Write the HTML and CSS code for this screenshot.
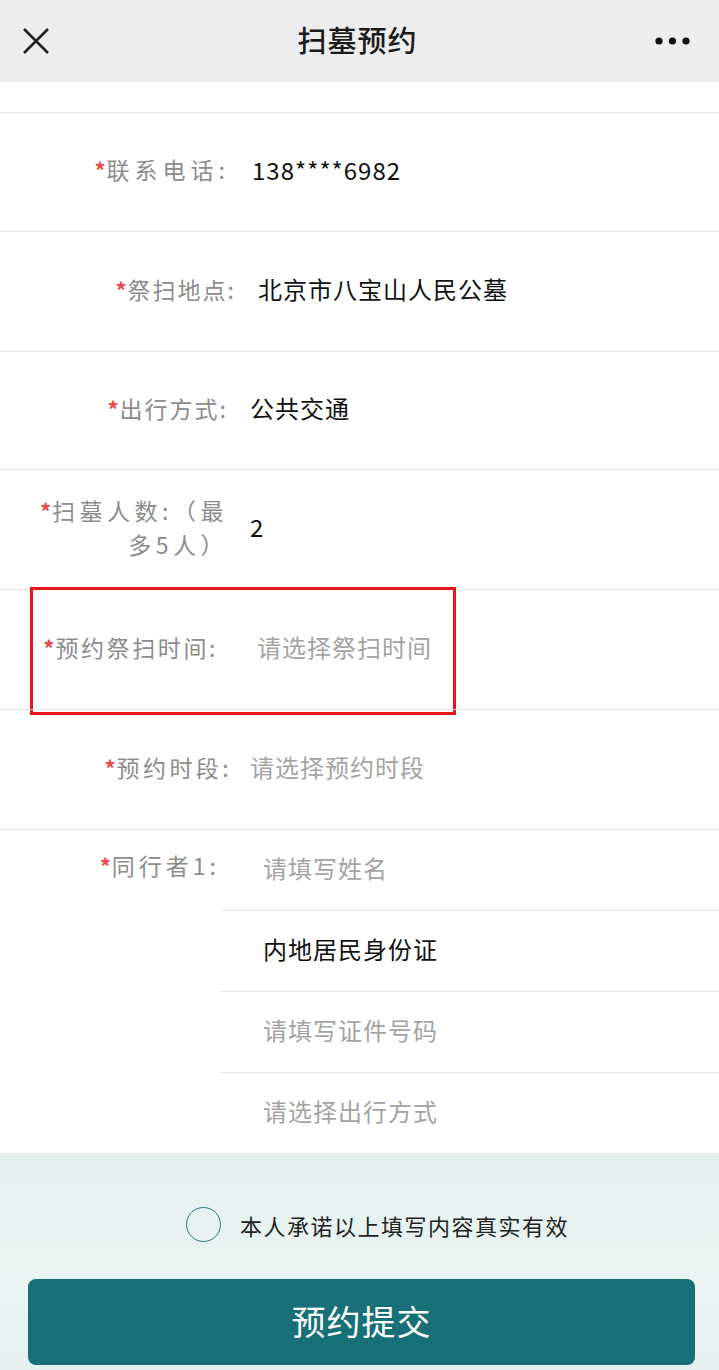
FILE: index.html
```html
<html>
<head>
<meta http-equiv="Content-Type" content="text/html; charset=UTF-8" />
<meta name="viewport" content="width=device-width,initial-scale=1.0">
<link rel="stylesheet" href="styles.css">
</head>
<body>

<div class="topbar">
	<svg class="icon-close" width="28" height="28" viewBox="0 0 28 28">
		<path d="M2 2 L26 26 M26 2 L2 26" stroke="#222" stroke-width="2.6" fill="none" />
	</svg>
	<div class="title">扫墓预约</div>
	<svg class="icon-more" width="36" height="10" viewBox="0 0 36 10">
		<circle cx="4" cy="5" r="3.6" fill="#111" />
		<circle cx="17.5" cy="5" r="3.6" fill="#111" />
		<circle cx="31" cy="5" r="3.6" fill="#111" />
	</svg>
</div>

<div class="spacer"></div>

<form class="form">
	<div class="row row-first">
		<div class="label label-phone"><span class="req">*</span>联系电话:</div>
		<div class="value">138****6982</div>
	</div>
	<div class="row">
		<div class="label label-place"><span class="req">*</span>祭扫地点:</div>
		<div class="value">北京市八宝山人民公墓</div>
	</div>
	<div class="row row-short">
		<div class="label label-way"><span class="req">*</span>出行方式:</div>
		<div class="value">公共交通</div>
	</div>
	<div class="row">
		<div class="label label-wrap"><span class="req">*</span>扫墓人数:（最多5人）</div>
		<div class="value">2</div>
	</div>
	<div class="row">
		<div class="label label-date"><span class="req">*</span>预约祭扫时间:</div>
		<div class="value placeholder">请选择祭扫时间</div>
		<div class="mark"></div>
	</div>
	<div class="row">
		<div class="label label-slot"><span class="req">*</span>预约时段:</div>
		<div class="value placeholder">请选择预约时段</div>
	</div>

	<div class="companion">
		<div class="label label-top"><span class="req">*</span>同行者1:</div>
		<div class="sublist">
			<div class="subrow placeholder">请填写姓名</div>
			<div class="subrow">内地居民身份证</div>
			<div class="subrow placeholder">请填写证件号码</div>
			<div class="subrow placeholder">请选择出行方式</div>
		</div>
	</div>
</form>

<div class="footer">
	<label class="agree">
		<span class="radio"></span>
		<span>本人承诺以上填写内容真实有效</span>
	</label>
	<button class="submit" type="button">预约提交</button>
</div>

</body>
</html>
```

FILE: styles.css
```css
:root {
	--color-line: #e6e6e6;
	--color-label: #8c8c8c;
	--color-hint: #a3a3a3;
	--color-red: #e94b4b;
	--color-teal: #176f78;
}

body {
	margin: 0;
	background-color: #ffffff;
	color: #111111;
	font-family: "Noto Sans CJK SC", "Noto Sans", sans-serif;
	width: 719px;
	height: 1370px;
	overflow: hidden;
}

.topbar {
	height: 82px;
	background-color: #ededed;
	display: flex;
	align-items: center;
	justify-content: space-between;
	padding: 0 28px 0 22px;
	box-sizing: border-box;
}

.title {
	font-size: 29px;
	font-weight: 500;
	color: #1a1a1a;
	letter-spacing: 1px;
	margin-left: 10px;
	margin-bottom: 4px;
}

.spacer {
	height: 30px;
}

.form {
	margin: 0;
}

.row {
	position: relative;
	display: flex;
	align-items: center;
	height: 120px;
	padding-bottom: 6px;
	border-top: 1px solid var(--color-line);
	box-sizing: border-box;
}

.row-first {
	height: 119px;
}

.row-short {
	height: 118px;
}

.label {
	flex: 0 0 230px;
	text-align: right;
	font-size: 23px;
	letter-spacing: 1px;
	line-height: 34px;
	color: var(--color-label);
}

.label-phone {
	letter-spacing: 5px;
}

.label-place {
	flex-basis: 236px;
	letter-spacing: 2px;
}

.label-way {
	flex-basis: 228px;
	letter-spacing: 2px;
}

.label-wrap {
	flex-basis: 228px;
	padding-left: 30px;
	box-sizing: border-box;
	letter-spacing: 4.5px;
}

.label-date {
	flex-basis: 218px;
	letter-spacing: 2.6px;
}

.label-date + .value {
	padding-left: 39px;
}

.label-slot {
	flex-basis: 232px;
	letter-spacing: 3.4px;
}

.label-slot + .value {
	padding-left: 18px;
}

.req {
	color: var(--color-red);
	font-weight: bold;
	font-size: 22px;
	letter-spacing: 1px;
}

.value {
	padding-left: 22px;
	font-size: 24px;
	letter-spacing: 1px;
	color: #111111;
}

.placeholder {
	color: var(--color-hint);
}

.mark {
	position: absolute;
	left: 30px;
	top: -3px;
	width: 426px;
	height: 128px;
	border: 3px solid #e8141c;
	box-sizing: border-box;
}

.companion {
	display: flex;
	align-items: flex-start;
	border-top: 1px solid var(--color-line);
}

.label-top {
	flex: 0 0 220px;
	margin-top: 18px;
	letter-spacing: 4px;
}

.sublist {
	flex: 1;
	margin-left: 1px;
}

.subrow {
	height: 81px;
	display: flex;
	align-items: center;
	padding-left: 42px;
	padding-bottom: 5px;
	font-size: 24px;
	letter-spacing: 1px;
	border-bottom: 1px solid var(--color-line);
	box-sizing: border-box;
}

.subrow:last-child {
	border-bottom: none;
	height: 80px;
}

.footer {
	height: 217px;
	background: linear-gradient(180deg, #e3f1ee 0%, #eaf4f2 55%, #e6f0ef 100%);
	display: flex;
	flex-direction: column;
	align-items: center;
	padding-top: 54px;
	box-sizing: border-box;
}

.agree {
	display: flex;
	align-items: center;
	font-size: 22px;
	letter-spacing: 1.5px;
	color: #222222;
	margin-left: 36px;
}

.radio {
	width: 35px;
	height: 35px;
	border: 1.5px solid #2a7a80;
	border-radius: 50%;
	box-sizing: border-box;
	margin-right: 19px;
}

.submit {
	margin-top: 37px;
	margin-left: 4px;
	width: 667px;
	height: 86px;
	border: none;
	border-radius: 8px;
	background-color: var(--color-teal);
	color: #ffffff;
	font-family: "Noto Sans CJK SC", sans-serif;
	font-size: 34px;
	letter-spacing: 1px;
	padding-bottom: 4px;
}
```
